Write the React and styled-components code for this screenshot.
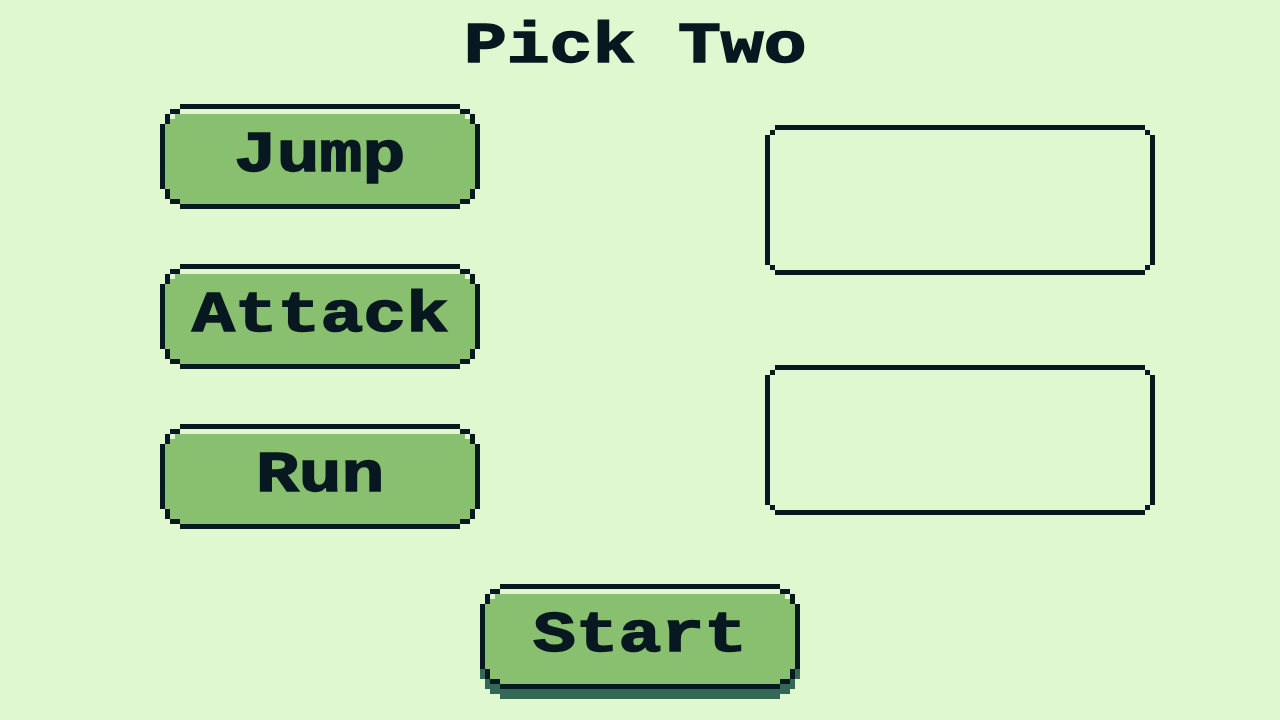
import React from 'react';
import styled, { createGlobalStyle } from 'styled-components';

const INK = '#081820';
const GREEN = '#88c070';
const SHADE = '#346856';
const PAPER = '#e0f8d0';

const GlobalStyle = createGlobalStyle`
  html, body {
    margin: 0;
    padding: 0;
    background: ${PAPER};
  }
  body {
    width: 1280px;
    height: 720px;
    overflow: hidden;
    font-family: "Liberation Mono", "DejaVu Sans Mono", monospace;
  }
`;

const outerClip = `polygon(
  20px 0, calc(100% - 20px) 0, calc(100% - 20px) 5px, calc(100% - 10px) 5px,
  calc(100% - 10px) 10px, calc(100% - 5px) 10px, calc(100% - 5px) 20px, 100% 20px,
  100% calc(100% - 20px), calc(100% - 5px) calc(100% - 20px), calc(100% - 5px) calc(100% - 10px),
  calc(100% - 10px) calc(100% - 10px), calc(100% - 10px) calc(100% - 5px), calc(100% - 20px) calc(100% - 5px),
  calc(100% - 20px) 100%, 20px 100%, 20px calc(100% - 5px), 10px calc(100% - 5px),
  10px calc(100% - 10px), 5px calc(100% - 10px), 5px calc(100% - 20px), 0 calc(100% - 20px),
  0 20px, 5px 20px, 5px 10px, 10px 10px, 10px 5px, 20px 5px)`;

const innerClip = `polygon(
  15px 0, calc(100% - 15px) 0, calc(100% - 15px) 5px, calc(100% - 5px) 5px,
  calc(100% - 5px) 15px, 100% 15px, 100% calc(100% - 15px), calc(100% - 5px) calc(100% - 15px),
  calc(100% - 5px) calc(100% - 5px), calc(100% - 15px) calc(100% - 5px), calc(100% - 15px) 100%,
  15px 100%, 15px calc(100% - 5px), 5px calc(100% - 5px), 5px calc(100% - 15px),
  0 calc(100% - 15px), 0 15px, 5px 15px, 5px 5px, 15px 5px)`;

const slotOuterClip = `polygon(
  10px 0, calc(100% - 10px) 0, calc(100% - 10px) 5px, calc(100% - 5px) 5px,
  calc(100% - 5px) 10px, 100% 10px, 100% calc(100% - 10px), calc(100% - 5px) calc(100% - 10px),
  calc(100% - 5px) calc(100% - 5px), calc(100% - 10px) calc(100% - 5px), calc(100% - 10px) 100%,
  10px 100%, 10px calc(100% - 5px), 5px calc(100% - 5px), 5px calc(100% - 10px),
  0 calc(100% - 10px), 0 10px, 5px 10px, 5px 5px, 10px 5px)`;

const slotInnerClip = `polygon(
  5px 0, calc(100% - 5px) 0, calc(100% - 5px) 5px, 100% 5px,
  100% calc(100% - 5px), calc(100% - 5px) calc(100% - 5px), calc(100% - 5px) 100%,
  5px 100%, 5px calc(100% - 5px), 0 calc(100% - 5px), 0 5px, 5px 5px)`;

const Screen = styled.main`
  width: 1280px;
  height: 720px;
  box-sizing: border-box;
  padding-top: 16px;
  display: flex;
  flex-direction: column;
  align-items: stretch;
`;

const Title = styled.h1`
  margin: 0;
  padding-right: 10px;
  font-family: "Liberation Mono", "DejaVu Sans Mono", monospace;
  font-weight: 700;
  font-size: 58px;
  line-height: 62px;
  text-align: center;
  color: ${INK};
  -webkit-text-stroke: 1.5px ${INK};
`;

const Label = styled.span`
  display: inline-block;
  transform: scaleX(1.23);
  transform-origin: center;
  white-space: pre;
`;

const Board = styled.section`
  margin-top: 26px;
  padding-left: 160px;
  display: grid;
  grid-template-columns: 320px 390px;
  column-gap: 285px;
  align-items: center;
`;

const ActionList = styled.div`
  display: flex;
  flex-direction: column;
  gap: 55px;
`;

const SlotList = styled.div`
  padding-top: 7px;
  display: flex;
  flex-direction: column;
  gap: 90px;
`;

const ButtonFrame = styled.button`
  width: 320px;
  height: 105px;
  padding: 5px;
  margin: 0;
  border: none;
  box-sizing: border-box;
  background: ${INK};
  clip-path: ${outerClip};
  display: block;
  cursor: pointer;
`;

const ButtonFace = styled.span`
  width: 100%;
  height: 100%;
  box-sizing: border-box;
  padding-bottom: 2px;
  display: flex;
  align-items: center;
  justify-content: center;
  clip-path: ${innerClip};
  background:
    linear-gradient(${PAPER}, ${PAPER}) 5px 5px / 5px 5px no-repeat,
    linear-gradient(${PAPER}, ${PAPER}) calc(100% - 5px) 5px / 5px 5px no-repeat,
    linear-gradient(${PAPER}, ${PAPER}) 0 0 / 100% 5px no-repeat,
    ${GREEN};
  font-family: "Liberation Mono", "DejaVu Sans Mono", monospace;
  font-weight: 700;
  font-size: 58px;
  line-height: 1;
  color: ${INK};
  -webkit-text-stroke: 1.5px ${INK};
`;

const StartRow = styled.div`
  margin-top: 55px;
  display: flex;
  justify-content: center;
`;

const Raised = styled.div`
  filter: drop-shadow(0 10px 0 ${SHADE});
`;

const SlotFrame = styled.div`
  width: 390px;
  height: 150px;
  padding: 5px;
  box-sizing: border-box;
  background: ${INK};
  clip-path: ${slotOuterClip};
`;

const SlotWell = styled.div`
  width: 100%;
  height: 100%;
  background: ${PAPER};
  clip-path: ${slotInnerClip};
`;

function PixelButton({ children }) {
  return (
    <ButtonFrame type="button">
      <ButtonFace>
        <Label>{children}</Label>
      </ButtonFace>
    </ButtonFrame>
  );
}

function Slot() {
  return (
    <SlotFrame>
      <SlotWell />
    </SlotFrame>
  );
}

export default function App() {
  return (
    <>
      <GlobalStyle />
      <Screen>
        <Title>
          <Label>Pick Two</Label>
        </Title>
        <Board>
          <ActionList>
            <PixelButton>Jump</PixelButton>
            <PixelButton>Attack</PixelButton>
            <PixelButton>Run</PixelButton>
          </ActionList>
          <SlotList>
            <Slot />
            <Slot />
          </SlotList>
        </Board>
        <StartRow>
          <Raised>
            <PixelButton>Start</PixelButton>
          </Raised>
        </StartRow>
      </Screen>
    </>
  );
}
